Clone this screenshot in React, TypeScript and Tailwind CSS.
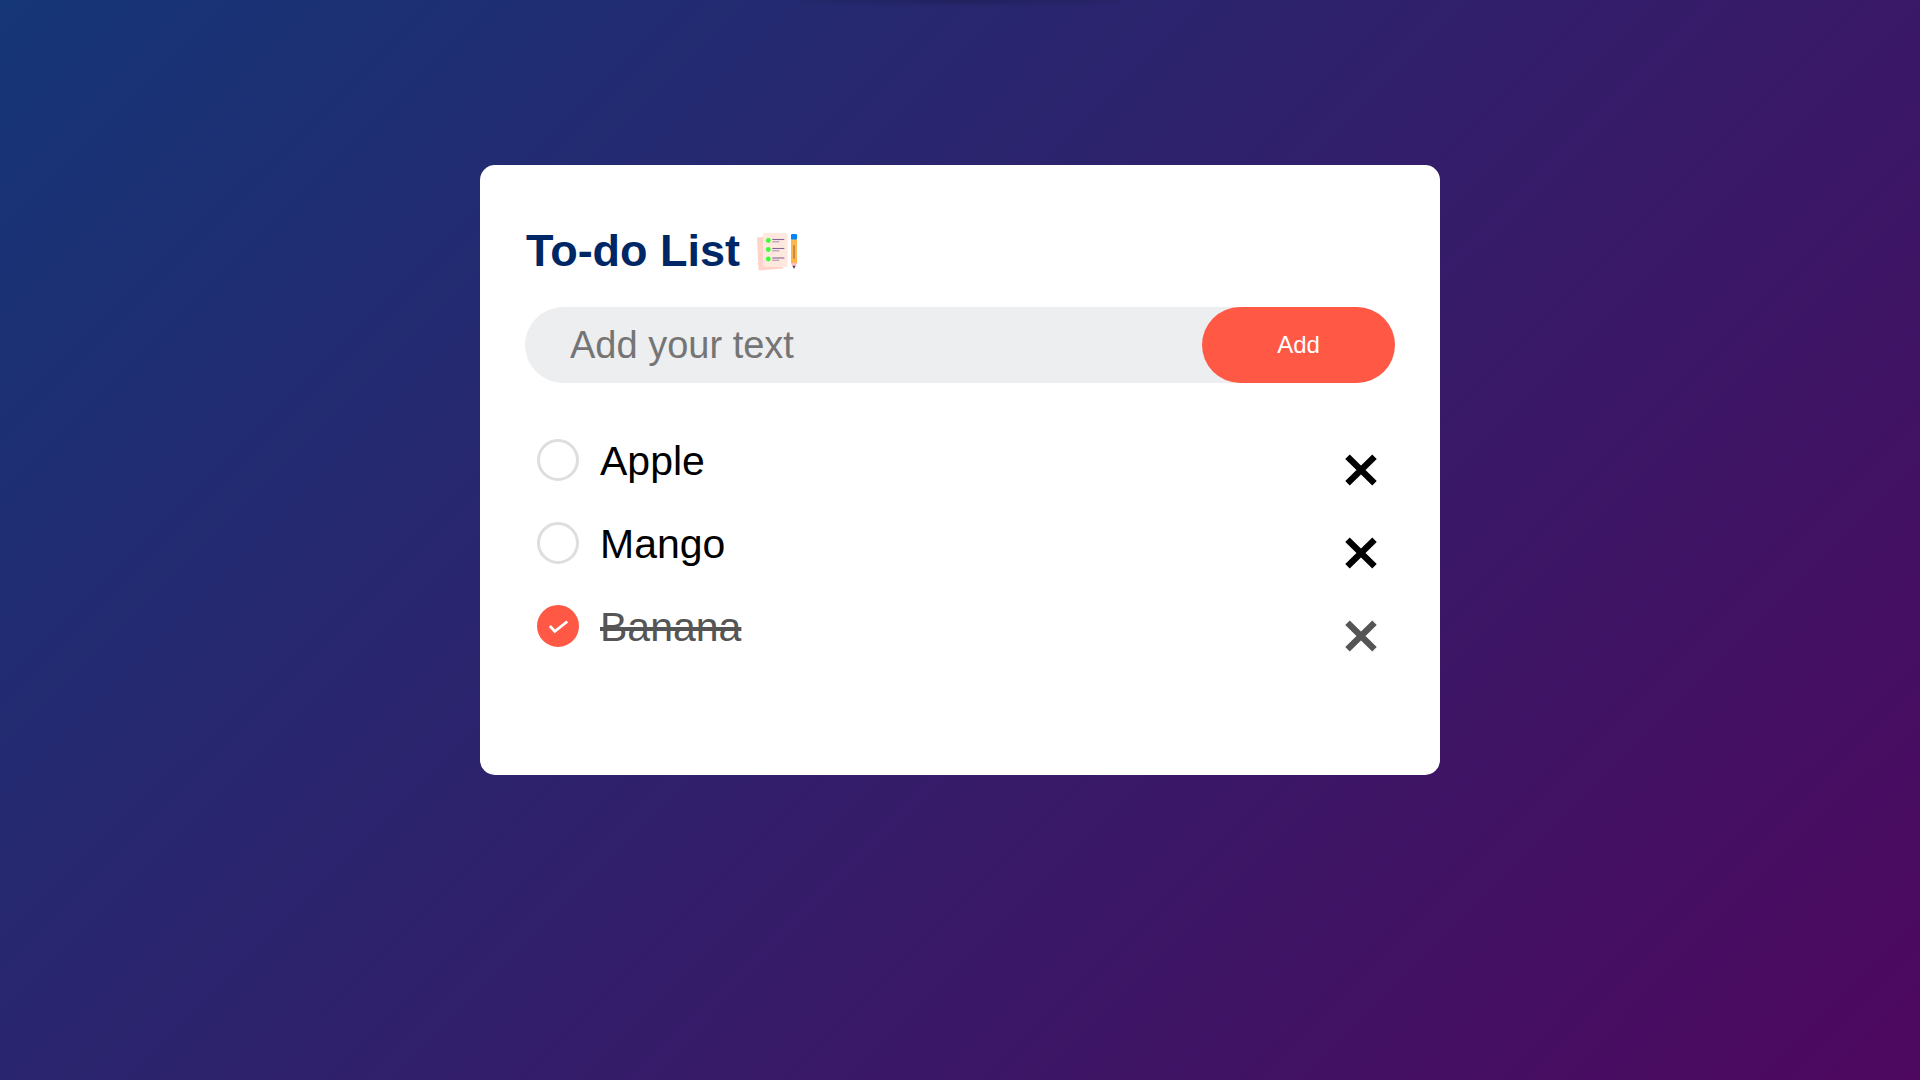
import { useState } from "react";

type Task = { id: number; text: string; done: boolean };

const initialTasks: Task[] = [
  { id: 1, text: "Apple", done: false },
  { id: 2, text: "Mango", done: false },
  { id: 3, text: "Banana", done: true },
];

function ListIcon() {
  return (
    <svg viewBox="0 -1 42 40" className="h-10 w-[42px]" aria-hidden="true">
      <path d="M1 5.500L25 3.500L27 36.500L4 38.500Q2.500 38.500 2.400 37Z" fill="#ffd3c9" />
      <rect x="7" y="1" width="24.500" height="34" rx="1.500" fill="#ffe8de" />
      {[8.5, 17.5, 27].map((y) => (
        <g key={y}>
          <circle cx="12.300" cy={y} r="2.400" fill="#3dfb35" />
          <path d={`M16.300 ${y - 1}h12`} stroke="#83659a" strokeWidth="1.100" />
          <path d={`M16.300 ${y + 1.3}h7`} stroke="#b999b4" strokeWidth="1.200" />
        </g>
      ))}
      <rect x="35" y="2" width="6" height="6" rx="1" fill="#0084ff" />
      <rect x="35" y="7.500" width="6" height="24" fill="#ffb74d" />
      <rect x="37.200" y="13" width="1.700" height="14" rx=".8" fill="#b98640" />
      <path d="M35 31h6L39.500 34.500h-3Z" fill="#ffc0c5" />
      <path d="M36.400 33.700h3.200L38 37Z" fill="#48474c" />
    </svg>
  );
}

export default function App() {
  const [tasks, setTasks] = useState(initialTasks);
  const [draft, setDraft] = useState("");

  const add = () => {
    if (!draft.trim()) return;
    setTasks([...tasks, { id: Date.now(), text: draft.trim(), done: false }]);
    setDraft("");
  };
  const toggle = (id: number) =>
    setTasks(tasks.map((t) => (t.id === id ? { ...t, done: !t.done } : t)));
  const remove = (id: number) => setTasks(tasks.filter((t) => t.id !== id));

  return (
    <div className="min-h-screen bg-[linear-gradient(135deg,#153677,#4e085f)] px-4 pb-16 font-['Liberation_Sans',Arial,sans-serif]">
      <div className="mx-auto h-[165px] max-w-80 bg-[radial-gradient(ellipse_at_top,#00000026,transparent)] bg-[length:100%_6px] bg-no-repeat" />
      <main className="mx-auto max-w-[960px] rounded-[15px] bg-white px-[45px] pt-[60px] pb-[108px]">
        <h1 className="flex h-[52px] items-center gap-4 pl-px text-[45px] font-bold text-[#002765]">
          To-do List
          <ListIcon />
        </h1>
        <form
          className="mt-[30px] flex h-[76px] rounded-full bg-[#edeef0]"
          onSubmit={(e) => {
            e.preventDefault();
            add();
          }}
        >
          <input
            type="text"
            aria-label="New task"
            placeholder="Add your text"
            value={draft}
            onChange={(e) => setDraft(e.target.value)}
            className="min-w-0 flex-1 rounded-full bg-transparent pl-[45px] text-[38px] outline-none placeholder:text-[#757575]"
          />
          <button type="submit" className="w-[193px] rounded-full bg-[#ff5945] text-2xl text-white">
            Add
          </button>
        </form>
        <ul className="mt-[35px]">
          {tasks.map((t) => (
            <li key={t.id} className="flex h-[83px] items-center pr-3 pl-3">
              <label className="flex flex-1 cursor-pointer items-center gap-[21px]">
                <span className="grid size-[42px] shrink-0 place-items-center">
                  <input
                    type="checkbox"
                    checked={t.done}
                    onChange={() => toggle(t.id)}
                    className="col-start-1 row-start-1 size-full appearance-none rounded-full border-3 border-[#dedede] checked:border-[#ff5945] checked:bg-[#ff5945]"
                  />
                  {t.done && (
                    <svg viewBox="0 0 42 42" className="pointer-events-none col-start-1 row-start-1 size-full" aria-hidden="true">
                      <path d="M12.800 21L17.800 26.300L30.300 16.500" fill="none" stroke="#fff" strokeWidth="2.800" />
                    </svg>
                  )}
                </span>
                <span
                  className={
                    t.done
                      ? "pt-0.5 text-[41px] leading-[46px] text-[#555] line-through"
                      : "pt-0.5 text-[41px] leading-[46px] text-black"
                  }
                >
                  {t.text}
                </span>
              </label>
              <button
                type="button"
                aria-label={`Remove ${t.text}`}
                onClick={() => remove(t.id)}
                className={t.done ? "mt-5 size-11 p-1.5 text-[#555]" : "mt-5 size-11 p-1.5 text-black"}
              >
                <svg viewBox="0 0 32 32" className="size-full" aria-hidden="true">
                  <path d="M2.500 2.700L29.500 29.300M29.500 2.700L2.500 29.300" stroke="currentColor" strokeWidth="6.400" />
                </svg>
              </button>
            </li>
          ))}
        </ul>
      </main>
    </div>
  );
}
